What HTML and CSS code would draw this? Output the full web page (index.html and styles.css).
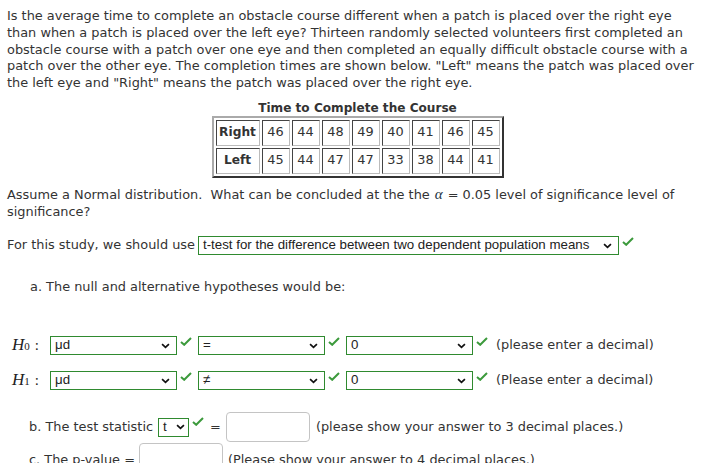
FILE: index.html
```html
<!DOCTYPE html>
<html>
<head>
<meta charset="utf-8">
<link rel="stylesheet" href="styles.css">
</head>
<body>
<div class="page">
  <p class="intro">Is the average time to complete an obstacle course different when a patch is placed over the right eye than when a patch is placed over the left eye? Thirteen randomly selected volunteers first completed an obstacle course with a patch over one eye and then completed an equally difficult obstacle course with a patch over the other eye. The completion times are shown below. "Left" means the patch was placed over the left eye and "Right" means the patch was placed over the right eye.</p>

  <div class="table-wrap">
    <div class="caption">Time to Complete the Course</div>
    <table class="data">
      <tr><th>Right</th><td>46</td><td>44</td><td>48</td><td>49</td><td>40</td><td>41</td><td>46</td><td>45</td></tr>
      <tr><th>Left</th><td>45</td><td>44</td><td>47</td><td>47</td><td>33</td><td>38</td><td>44</td><td>41</td></tr>
    </table>
  </div>

  <p class="assume">Assume a Normal distribution.&nbsp; What can be concluded at the the<span class="alpha">α</span>= 0.05 level of significance level of significance?</p>

  <div class="row study">
    <span>For this study, we should use</span>
    <div class="sel sel-wide"><span>t-test for the difference between two dependent population means</span><svg class="chev" viewBox="0 0 10 7" width="9" height="6"><path d="M1 1.2 L5 5 L9 1.2" fill="none" stroke="#111" stroke-width="2"/></svg></div>
    <svg class="check" viewBox="0 0 12 9" width="12" height="9"><path d="M1 5 L4.2 7.8 L11 1" fill="none" stroke="#3c9a3c" stroke-width="2"/></svg>
  </div>

  <p class="part-a">a. The null and alternative hypotheses would be:</p>

  <div class="hyp">
    <div class="row hrow">
      <span class="hlabel"><i>H</i><sub>0</sub><span class="colon">:</span></span>
      <div class="sel sel-h"><span>μd</span><svg class="chev" viewBox="0 0 10 7" width="9" height="6"><path d="M1 1.2 L5 5 L9 1.2" fill="none" stroke="#111" stroke-width="2"/></svg></div>
      <svg class="check" viewBox="0 0 12 9" width="12" height="9"><path d="M1 5 L4.2 7.8 L11 1" fill="none" stroke="#3c9a3c" stroke-width="2"/></svg>
      <div class="sel sel-h"><span>=</span><svg class="chev" viewBox="0 0 10 7" width="9" height="6"><path d="M1 1.2 L5 5 L9 1.2" fill="none" stroke="#111" stroke-width="2"/></svg></div>
      <svg class="check" viewBox="0 0 12 9" width="12" height="9"><path d="M1 5 L4.2 7.8 L11 1" fill="none" stroke="#3c9a3c" stroke-width="2"/></svg>
      <div class="sel sel-h"><span>0</span><svg class="chev" viewBox="0 0 10 7" width="9" height="6"><path d="M1 1.2 L5 5 L9 1.2" fill="none" stroke="#111" stroke-width="2"/></svg></div>
      <svg class="check" viewBox="0 0 12 9" width="12" height="9"><path d="M1 5 L4.2 7.8 L11 1" fill="none" stroke="#3c9a3c" stroke-width="2"/></svg>
      <span class="note">(please enter a decimal)</span>
    </div>
    <div class="row hrow">
      <span class="hlabel"><i>H</i><sub>1</sub><span class="colon">:</span></span>
      <div class="sel sel-h"><span>μd</span><svg class="chev" viewBox="0 0 10 7" width="9" height="6"><path d="M1 1.2 L5 5 L9 1.2" fill="none" stroke="#111" stroke-width="2"/></svg></div>
      <svg class="check" viewBox="0 0 12 9" width="12" height="9"><path d="M1 5 L4.2 7.8 L11 1" fill="none" stroke="#3c9a3c" stroke-width="2"/></svg>
      <div class="sel sel-h"><span>≠</span><svg class="chev" viewBox="0 0 10 7" width="9" height="6"><path d="M1 1.2 L5 5 L9 1.2" fill="none" stroke="#111" stroke-width="2"/></svg></div>
      <svg class="check" viewBox="0 0 12 9" width="12" height="9"><path d="M1 5 L4.2 7.8 L11 1" fill="none" stroke="#3c9a3c" stroke-width="2"/></svg>
      <div class="sel sel-h"><span>0</span><svg class="chev" viewBox="0 0 10 7" width="9" height="6"><path d="M1 1.2 L5 5 L9 1.2" fill="none" stroke="#111" stroke-width="2"/></svg></div>
      <svg class="check" viewBox="0 0 12 9" width="12" height="9"><path d="M1 5 L4.2 7.8 L11 1" fill="none" stroke="#3c9a3c" stroke-width="2"/></svg>
      <span class="note">(Please enter a decimal)</span>
    </div>
  </div>

  <div class="row brow">
    <span>b. The test statistic</span>
    <div class="sel sel-t"><span>t</span><svg class="chev" viewBox="0 0 10 7" width="9" height="6"><path d="M1 1.2 L5 5 L9 1.2" fill="none" stroke="#111" stroke-width="2"/></svg></div>
    <svg class="check" viewBox="0 0 12 9" width="12" height="9"><path d="M1 5 L4.2 7.8 L11 1" fill="none" stroke="#3c9a3c" stroke-width="2"/></svg>
    <span class="eq">=</span>
    <div class="input"></div>
    <span class="note2">(please show your answer to 3 decimal places.)</span>
  </div>

  <div class="row crow">
    <span>c. The p-value =</span>
    <div class="input"></div>
    <span class="note3">(Please show your answer to 4 decimal places.)</span>
  </div>
</div>
</body>
</html>
```

FILE: styles.css
```css
html, body {
  margin: 0;
  padding: 0;
  background: #fff;
}
.page {
  padding: 8px 0 0 7px;
  font-family: "DejaVu Sans", "Noto Sans", sans-serif;
  font-size: 12.9px;
  color: #333;
  line-height: 16.75px;
  width: 700px;
}
p {
  margin: 0;
}
.intro {
  width: 695px;
}
.table-wrap {
  display: flex;
  flex-direction: column;
  align-items: center;
  margin-top: 9px;
  width: 700px;
}
.caption {
  font-weight: bold;
  font-size: 12.1px;
  margin-left: 1px;
  line-height: 15px;
}
.data {
  border-collapse: separate;
  border-spacing: 2px;
  border: 2px solid;
  border-color: #aaa #333 #333 #aaa;
  margin-left: 1px;
}
.data th, .data td {
  border: 1px solid;
  border-color: #444 #bbb #bbb #444;
  height: 24px;
  padding: 0;
  text-align: center;
  font-weight: normal;
  width: 26px;
}
.data th {
  font-weight: bold;
  font-size: 12.2px;
  width: 42px;
}
.assume {
  margin-top: 9px;
  width: 690px;
}
.alpha {
  display: inline-block;
  margin: 0 5px;
  font-family: "Liberation Serif", serif;
  font-style: italic;
  font-size: 15px;
  line-height: 1;
  color: #234;
}
.row {
  display: flex;
  align-items: center;
}
.study {
  margin-top: 16px;
  height: 19px;
}
.sel {
  display: flex;
  align-items: center;
  justify-content: space-between;
  box-sizing: border-box;
  border: 1px solid #2f8a2f;
  height: 19px;
  padding: 0 6px 0 4px;
  font-family: "Liberation Sans", Arial, sans-serif;
  font-size: 13.3px;
  color: #222;
  background: #fff;
}
.sel-wide {
  width: 421px;
  margin-left: 3px;
}
.check {
  align-self: flex-start;
  margin: 1px 0 0 3px;
  flex: none;
}
.part-a {
  margin: 24px 0 0 23px;
}
.hyp {
  margin-top: 40px;
}
.hrow {
  height: 19px;
  margin-bottom: 16px;
}
.hlabel {
  display: inline-flex;
  align-items: baseline;
  width: 43px;
  padding-left: 5px;
  box-sizing: border-box;
  font-family: "Liberation Serif", serif;
  font-size: 17px;
  color: #222;
}
.hlabel sub {
  font-size: 11px;
  vertical-align: -3px;
  font-style: normal;
}
.hlabel .colon {
  margin-left: 5px;
  font-size: 15px;
}
.sel-h {
  width: 127px;
}
.hrow .check {
  margin-right: 6px;
}
.note {
  margin-left: 2px;
}
.brow {
  margin: 22px 0 0 22px;
  height: 30px;
}
.sel-t {
  width: 31px;
  margin-left: 5px;
  padding: 0 3px 0 4px;
}
.brow .check {
  align-self: center;
  margin-top: -12px;
}
.eq {
  margin: 0 5px 0 6px;
}
.input {
  box-sizing: border-box;
  width: 84px;
  height: 30px;
  border: 1px solid #c4c4c4;
  border-radius: 4px;
  background: #fff;
}
.note2 {
  margin-left: 6px;
}
.crow {
  margin: 1px 0 0 22px;
  align-items: flex-start;
}
.crow span {
  margin-top: 9px;
}
.crow .input {
  margin-left: 4px;
}
.note3 {
  margin-left: 5px;
}
```
